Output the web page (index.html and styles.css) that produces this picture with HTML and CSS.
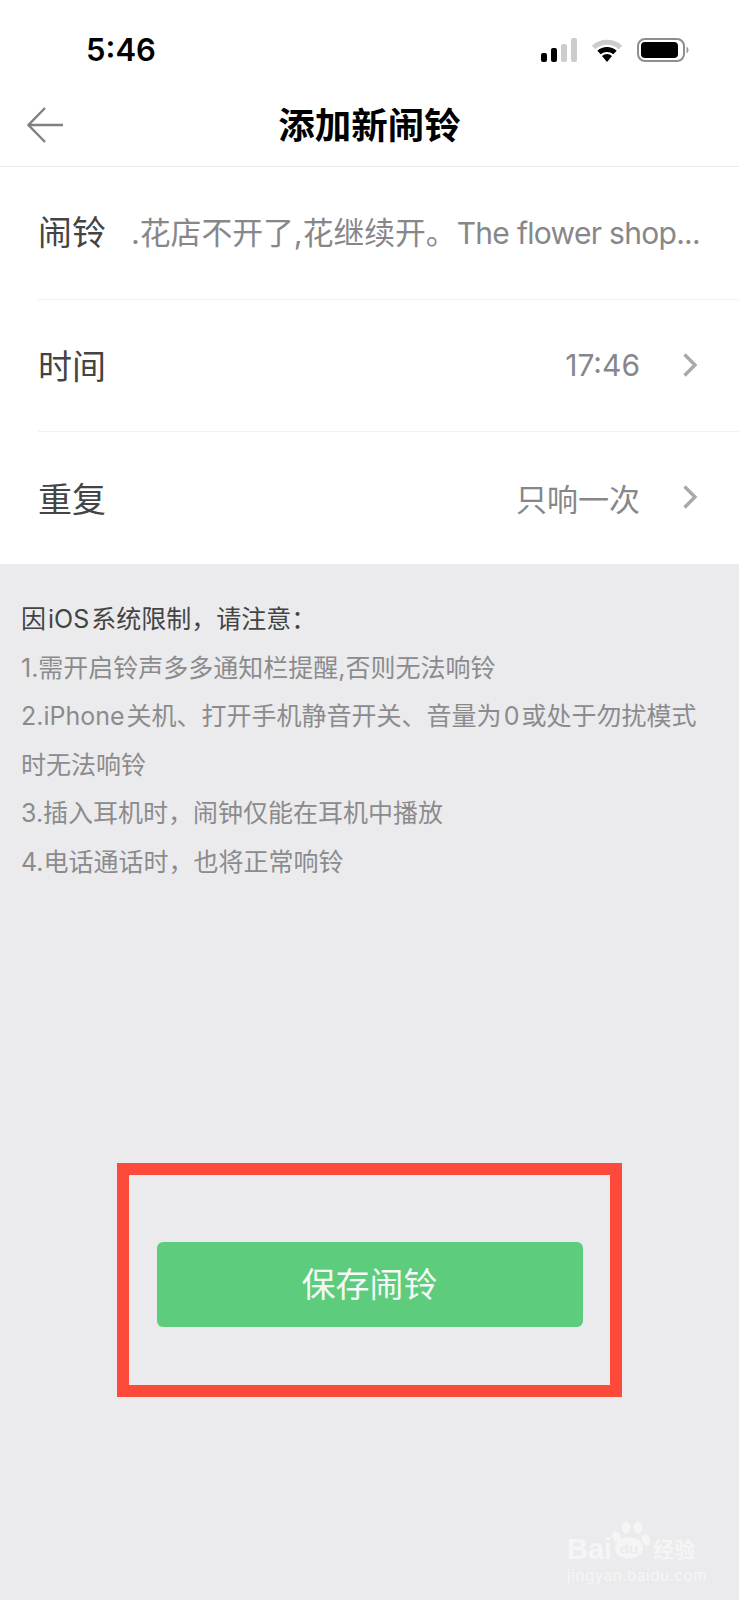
FILE: index.html
```html
<!DOCTYPE html>
<html lang="zh-CN">

<head>
    <title>添加新闹铃</title>
    <meta name="viewport" content="width=device-width,initial-scale=1">
    <link rel="stylesheet" href="styles.css">
</head>

<body>
    <div class="page">
        <div class="statusbar">
            <span class="clock">5:46</span>
            <div class="status-icons">
                <svg class="signal" viewBox="0 0 36 24" width="36" height="24">
                    <rect x="0" y="15" width="6" height="9" rx="2" fill="#000" />
                    <rect x="10" y="10" width="6" height="14" rx="2" fill="#000" />
                    <rect x="20" y="6" width="6" height="18" rx="2" fill="#ccc" />
                    <rect x="30" y="0" width="6" height="24" rx="2" fill="#ccc" />
                </svg>
                <svg class="wifi" viewBox="0 0 32 24" width="32" height="24" fill="none" stroke-width="5">
                    <path d="M2.5 9.5 A20 20 0 0 1 29.5 9.5" stroke="#ccc" />
                    <path d="M8 14.5 A12 12 0 0 1 24 14.5" stroke="#000" />
                    <path d="M11 18 L16 24 L21 18 A7.5 7.5 0 0 0 11 18 Z" fill="#000" stroke="none" />
                </svg>
                <svg class="battery" viewBox="0 0 52 24" width="52" height="24">
                    <rect x="1" y="1" width="46" height="22" rx="7" fill="none" stroke="#8e8e8e" stroke-width="2" />
                    <rect x="4" y="4" width="37" height="16" rx="4" fill="#000" />
                    <path d="M49.5 8.5 A4 4 0 0 1 49.5 15.5 Z" fill="#9a9a9a" />
                </svg>
            </div>
        </div>

        <div class="navbar">
            <svg class="back" viewBox="0 0 36 36" width="36" height="36" fill="none" stroke="#808080" stroke-width="2.4">
                <path d="M18 1 L1.5 18 L18 35" />
                <path d="M1.5 18 H36" />
            </svg>
            <h1 class="title">添加新闹铃</h1>
        </div>

        <div class="form">
            <div class="row row-name">
                <span class="label">闹铃</span>
                <span class="value value-name">.花店不开了,花继续开。<span class="latin">The flower shop...</span></span>
            </div>
            <div class="row">
                <span class="label">时间</span>
                <span class="value value-time">17:46</span>
                <svg class="chevron" viewBox="0 0 16 24" width="16" height="24" fill="none" stroke="#a9a9ad" stroke-width="3.4">
                    <path d="M2.5 1.5 L13 12 L2.5 22.5" />
                </svg>
            </div>
            <div class="row">
                <span class="label">重复</span>
                <span class="value">只响一次</span>
                <svg class="chevron" viewBox="0 0 16 24" width="16" height="24" fill="none" stroke="#a9a9ad" stroke-width="3.4">
                    <path d="M2.5 1.5 L13 12 L2.5 22.5" />
                </svg>
            </div>
        </div>

        <div class="notes">
            <p class="notes-head">因 iOS 系统限制，请注意：</p>
            <p>1.需开启铃声多多通知栏提醒,否则无法响铃</p>
            <p>2.iPhone 关机、打开手机静音开关、音量为 0 或处于勿扰模式时无法响铃</p>
            <p>3.插入耳机时，闹钟仅能在耳机中播放</p>
            <p>4.电话通话时，也将正常响铃</p>
        </div>

        <div class="highlight">
            <button class="save">保存闹铃</button>
        </div>

        <!-- watermark sits on top of the screenshot -->
        <div class="watermark">
            <div class="wm-top">
                <span class="wm-bai">Bai</span>
                <svg class="wm-paw" viewBox="0 0 38 38" width="38" height="38" fill="#f5f5f6">
                    <ellipse cx="4.5" cy="16" rx="4" ry="6" transform="rotate(-25 4.5 16)" />
                    <ellipse cx="14" cy="6.5" rx="4.5" ry="6" />
                    <ellipse cx="26" cy="6.5" rx="4.5" ry="6" />
                    <ellipse cx="34" cy="19" rx="4" ry="6" transform="rotate(-20 34 19)" />
                    <ellipse cx="17" cy="27" rx="14" ry="10.5" />
                    <text x="17" y="33" class="wm-du">du</text>
                </svg>
                <span class="wm-jy">经验</span>
            </div>
            <div class="wm-url">jingyan.baidu.com</div>
        </div>
    </div>
</body>

</html>
```

FILE: styles.css
```css
* {
    box-sizing: border-box;
}

body {
    margin: 0;
    font-family: Inter, "Noto Sans CJK SC", sans-serif;
    background-color: #ebebed;
}

.page {
    position: relative;
    width: 739px;
    height: 1600px;
    overflow: hidden;
}

/* Top of the phone */
.statusbar {
    display: flex;
    justify-content: space-between;
    align-items: center;
    height: 84px;
    padding: 14px 50px 0 86px;
    background-color: #fff;
}

.clock {
    font-size: 31px;
    font-weight: 600;
    color: #000;
}

.status-icons {
    display: flex;
    align-items: center;
    gap: 14px;
    margin-top: 2px;
}

.navbar {
    position: relative;
    display: flex;
    justify-content: center;
    align-items: center;
    height: 83px;
    padding-bottom: 4px;
    background-color: #fff;
    border-bottom: 1px solid #ebebeb;
}

.back {
    position: absolute;
    left: 27px;
    top: 23px;
}

.title {
    margin: 0;
    font-size: 36.5px;
    font-weight: 700;
    color: #000;
}

/* Form rows */
.form {
    padding-left: 38px;
    background-color: #fff;
}

.row {
    display: flex;
    align-items: center;
    height: 132px;
    padding-right: 41px;
    padding-bottom: 2px;
    border-bottom: 1px solid #f1f1f1;
}

.row-name {
    height: 133px;
    padding-bottom: 5px;
}

.row:last-child {
    height: 132px;
    border-bottom: none;
}

.label {
    font-size: 34px;
    color: #444;
    white-space: nowrap;
}

.value {
    margin-left: auto;
    font-size: 31px;
    color: #87878a;
    white-space: nowrap;
}

.value-time {
    font-size: 30px;
}

.value-name {
    margin-right: -2px;
    font-size: 30.8px;
}

.latin {
    font-size: 30px;
    letter-spacing: -0.7px;
}

.chevron {
    margin-left: 42px;
}

/* Notes under the form */
.notes {
    padding: 31px 36px 0 21px;
    font-size: 25px;
    line-height: 48.5px;
    word-spacing: -5px;
    color: #8b8b8e;
}

.notes p {
    margin: 0;
}

.notes .notes-head {
    color: #444;
}

/* Red annotation frame and save button */
.highlight {
    display: flex;
    justify-content: center;
    align-items: center;
    width: 505px;
    height: 234px;
    margin: 277px 0 0 117px;
    padding-top: 9px;
    border: 12px solid #fd4a3a;
}

.save {
    width: 426px;
    height: 85px;
    padding: 0 0 4px;
    border: none;
    border-radius: 6px;
    background-color: #5dcc7c;
    font-family: inherit;
    font-size: 34px;
    color: #f4fbf6;
}

.watermark {
    position: absolute;
    left: 567px;
    top: 1519px;
    width: 132px;
    color: #f5f5f6;
}

.wm-top {
    display: flex;
    align-items: flex-end;
    height: 44px;
}

.wm-bai {
    font-family: "Liberation Sans", sans-serif;
    font-size: 29px;
    font-weight: 700;
    line-height: 28px;
}

.wm-paw {
    flex-shrink: 0;
    margin-bottom: 4px;
}

.wm-du {
    font-family: "Liberation Sans", sans-serif;
    font-size: 15px;
    font-weight: 700;
    fill: #ebebed;
    text-anchor: middle;
}

.wm-jy {
    margin-left: 3px;
    font-size: 21px;
    font-weight: 700;
    line-height: 26px;
    white-space: nowrap;
}

.wm-url {
    margin-top: 3px;
    font-size: 15px;
    line-height: 20px;
    letter-spacing: 0.6px;
    white-space: nowrap;
}
```
